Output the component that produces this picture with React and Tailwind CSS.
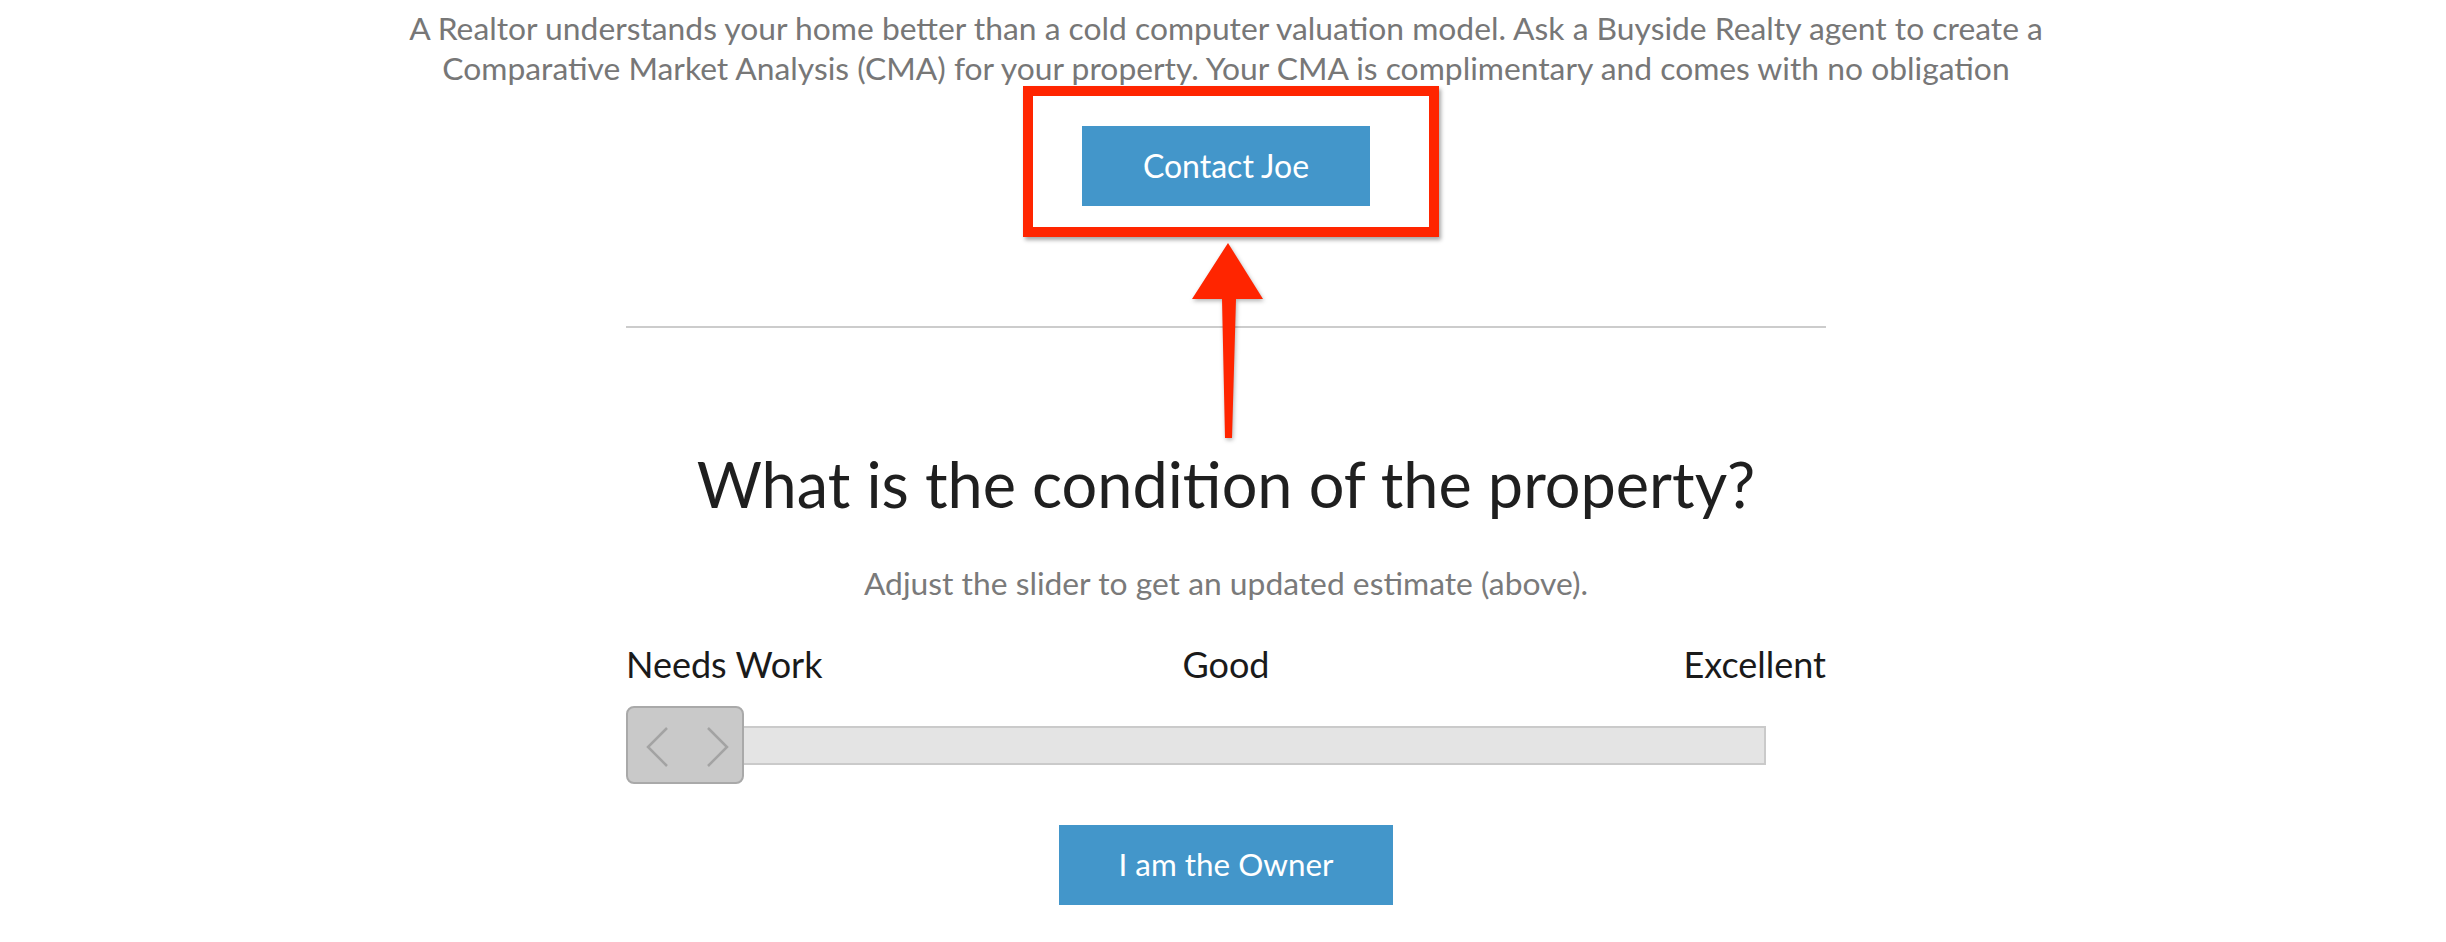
import React from "react";

function Chevrons() {
  return (
    <svg width="118" height="78" viewBox="0 0 118 78" className="absolute inset-0">
      <polyline points="39,20 20,39 39,58" fill="none" stroke="#a3a3a3" strokeWidth="2.5" strokeLinejoin="miter" />
      <polyline points="80,20 99,39 80,58" fill="none" stroke="#a3a3a3" strokeWidth="2.5" strokeLinejoin="miter" />
    </svg>
  );
}

export default function App() {
  return (
    <div className="relative w-full min-h-[942px] bg-white pl-[6px] font-['Lato','Noto_Sans',sans-serif] overflow-hidden">
      <p className="pt-[8px] text-center text-[31.8px] leading-[40px] text-[#777777]">
        A Realtor understands your home better than a cold computer valuation model. Ask a Buyside Realty agent to create a
        <br />
        Comparative Market Analysis (CMA) for your property. Your CMA is complimentary and comes with no obligation
      </p>

      <div className="flex justify-center mt-[38px]">
        <div className="relative">
          <button className="w-[288px] h-[80px] bg-[#4396ca] text-white text-[32px] leading-none">
            Contact Joe
          </button>
          <div className="absolute left-[-59px] top-[-40px] w-[416px] h-[151px] border-[10px] border-[#ff2500] shadow-[2px_3px_4px_rgba(0,0,0,0.35)] pointer-events-none" />
          <svg
            className="absolute left-[103px] top-[114px] z-10"
            width="85"
            height="205"
            viewBox="0 0 85 205"
            style={{ filter: "drop-shadow(1px 2px 2px rgba(0,0,0,0.3))" }}
          >
            <polygon
              points="43,3 78,59 51,59 47,198 40,198 37,59 7,59"
              fill="#ff2500"
            />
          </svg>
        </div>
      </div>

      <div className="w-[1200px] mx-auto">
        <div className="mt-[120px] h-[2px] bg-[#cccccc]" />

        <h2 className="mt-[117px] text-center text-[63px] leading-[77px] text-[#1f1f1f]">
          What is the condition of the property?
        </h2>

        <p className="mt-[41px] text-center text-[31.8px] leading-[40px] text-[#7a7a7a]">
          Adjust the slider to get an updated estimate (above).
        </p>

        <div className="mt-[42px] grid grid-cols-3 text-[36px] leading-[38px] text-[#1a1a1a]">
          <span className="text-left">Needs Work</span>
          <span className="text-center">Good</span>
          <span className="text-right">Excellent</span>
        </div>

        <div className="mt-[23px] relative h-[78px] flex items-center">
          <div className="w-[1140px] h-[39px] bg-[#e4e4e4] border-2 border-[#cacaca]" />
          <div className="absolute left-0 top-0 w-[118px] h-[78px] rounded-[8px] bg-[#c9c9c9] border-2 border-[#a9a9a9]">
            <Chevrons />
          </div>
        </div>

        <div className="mt-[41px] flex justify-center">
          <button className="w-[334px] h-[80px] bg-[#4396ca] text-white text-[31.4px] leading-none">
            I am the Owner
          </button>
        </div>
      </div>
    </div>
  );
}
